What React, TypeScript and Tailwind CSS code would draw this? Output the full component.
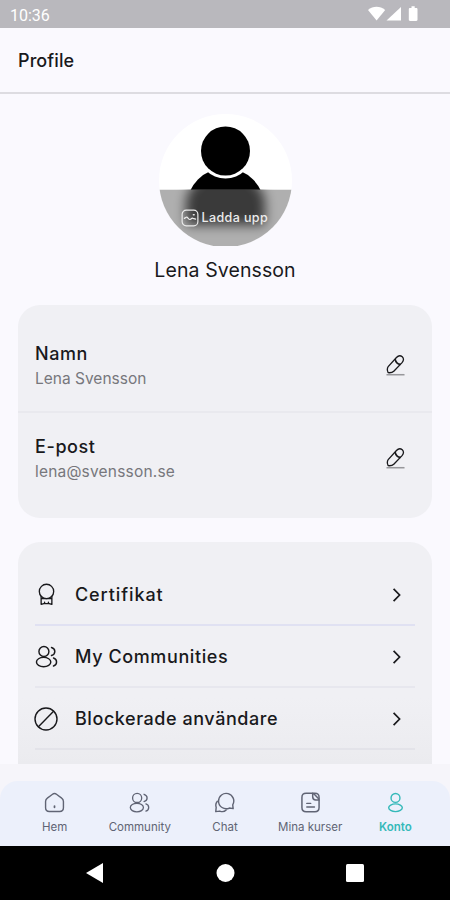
import type { ReactNode } from "react";

type IconProps = {
  className?: string;
};

type SvgIconProps = IconProps & {
  children: ReactNode;
  strokeWidth?: number;
};

function SvgIcon({ className, children, strokeWidth = 1.4 }: SvgIconProps) {
  return (
    <svg
      viewBox="0 0 24 24"
      fill="none"
      stroke="currentColor"
      strokeWidth={strokeWidth}
      strokeLinecap="round"
      strokeLinejoin="round"
      className={className}
    >
      {children}
    </svg>
  );
}

function RibbonIcon({ className }: IconProps) {
  return (
    <SvgIcon className={className}>
      <circle cx="12" cy="8.8" r="7.5" />
      <path d="M6.4 14v8.300l2.800-.8h5.600l2.800.8V14M6.400 16.300h11.200M10 21.500v-1.500M14 21.500v-1.500" />
    </SvgIcon>
  );
}

function PeopleIcon({ className }: IconProps) {
  return (
    <SvgIcon className={className} strokeWidth={1.5}>
      <circle cx="9.300" cy="6.800" r="5.200" />
      <ellipse cx="9" cy="17.800" rx="7.500" ry="4.900" />
      <path d="M17.200 2.600c2.200.7 3.500 2.200 3.500 4.200s-1.300 3.500-3.500 4.200M19.300 13.600c2 .6 3.200 2 3.200 4.100s-1.200 3.600-3.200 4.200" />
    </SvgIcon>
  );
}

function BlockIcon({ className }: IconProps) {
  return (
    <SvgIcon className={className}>
      <circle cx="12" cy="12" r="11" />
      <path d="M4.400 19.800 19.600 4.200" />
    </SvgIcon>
  );
}

function PencilIcon({ className }: IconProps) {
  return (
    <svg
      viewBox="0 0 20 24"
      fill="none"
      stroke="currentColor"
      strokeWidth="1.4"
      strokeLinejoin="round"
      className={className}
    >
      <path d="M2.300 13.200 11 3.600c1.900-2 4.400-2.200 6.100-.7 1.800 1.600 1.700 4-.2 6.100l-8.700 9c-1.200 1.200-2.700 1.700-5.100 1.600-1.900-.1-2.200-4.700-.8-6.400Z" />
      <path d="M9.600 5.200c.6 3.100 2.700 5.200 5.700 5.600" strokeWidth="1.8" />
      <path d="M.5 21.700h19" stroke="#97979b" strokeWidth="1.600" />
    </svg>
  );
}

function ChevronIcon({ className }: IconProps) {
  return (
    <svg
      viewBox="0 0 10 16"
      fill="none"
      stroke="currentColor"
      strokeWidth="1.700"
      className={className}
    >
      <path d="m1.600 1.800 6 6.200-6 6.200" />
    </svg>
  );
}

function HomeIcon({ className }: IconProps) {
  return (
    <SvgIcon className={className} strokeWidth={1.6}>
      <path d="M1.800 10.800c0-1.700.6-2.800 2-3.800l5.600-4.200c1.700-1.300 3.500-1.300 5.200 0L20.200 7c1.400 1 2 2.100 2 3.800V18c0 3-1.300 4.300-4.300 4.300H6.100c-3 0-4.300-1.300-4.300-4.300Z" />
      <path d="M12 16v1.500" strokeWidth="2" />
    </SvgIcon>
  );
}

function ChatIcon({ className }: IconProps) {
  return (
    <SvgIcon className={className} strokeWidth={1.6}>
      <path d="M5.200 10.300a8.700 8.700 0 1 1 16.200 4.400l.5 4.300-4.300-.7A8.700 8.700 0 0 1 5.200 10.300Z" />
      <path d="M3.800 10.500c-1.700 2-2.100 4.700-1.300 7l-.5 4.900 4.600-.6c2.700 1.100 5.400.7 7.300-1.200" />
    </SvgIcon>
  );
}

function CourseIcon({ className }: IconProps) {
  return (
    <SvgIcon className={className} strokeWidth={1.7}>
      <path d="M14.500 1.500H7C3.700 1.500 2.200 3 2.200 6.300v11.400c0 3.300 1.500 4.800 4.800 4.800h10c3.300 0 4.800-1.500 4.800-4.800V6.300c0-3.300-1.500-4.800-4.800-4.800h-2.500Z" />
      <path d="M14.500 1.500v4c0 2.500 1.100 3.700 3.500 3.700h3.800M15.800 2l5.500 5.600" />
      <path d="M7.800 13h4.400M7.800 17.200h8.700" />
    </SvgIcon>
  );
}

function UserIcon({ className }: IconProps) {
  return (
    <SvgIcon className={className} strokeWidth={1.6}>
      <circle cx="12" cy="6.800" r="5.100" />
      <ellipse cx="12" cy="18" rx="7.800" ry="4.400" />
    </SvgIcon>
  );
}

function PictureIcon({ className }: IconProps) {
  return (
    <SvgIcon className={className} strokeWidth={1.6}>
      <rect x="1.500" y="1.500" width="21" height="21" rx="5.500" />
      <path d="m4.500 12.500 2.500-1.500c2-1 3 3.500 5 3s2-2.500 4-1.500l3.500 1" />
      <path d="M16.500 7.500h1" strokeWidth="2" />
    </SvgIcon>
  );
}

const fields = [
  { label: "Namn", value: "Lena Svensson", valueSpacing: "tracking-[0px]" },
  { label: "E-post", value: "lena@svensson.se", valueSpacing: "tracking-[0.2px]" },
];

const links = [
  { label: "Certifikat", icon: RibbonIcon, size: "size-[23px]", line: "border-[#e0e1f2]", spacing: "tracking-[0.9px]" },
  { label: "My Communities", icon: PeopleIcon, size: "size-[23px]", line: "border-[#e7e7ee]", spacing: "tracking-[0.6px]" },
  { label: "Blockerade användare", icon: BlockIcon, size: "size-6", line: "border-[#e3e3e9]", spacing: "tracking-[0.55px]" },
];

const tabs = [
  { label: "Hem", icon: HomeIcon, active: false },
  { label: "Community", icon: PeopleIcon, active: false },
  { label: "Chat", icon: ChatIcon, active: false },
  { label: "Mina kurser", icon: CourseIcon, active: false },
  { label: "Konto", icon: UserIcon, active: true },
];

function StatusBar() {
  return (
    <div className="flex h-7 shrink-0 items-center justify-between bg-[#b9b8bd] pl-[10px] pr-[30px] text-white">
      <span className="pt-[3px] font-['Roboto'] text-[16px]">10:36</span>
      <svg viewBox="0 0 52 16" fill="currentColor" className="h-4 w-[52px]">
        <path d="M0 4C5-.3 12-.3 17.200 4L8.600 14.500Z" />
        <path d="M33 1v13.500H18.500Z" />
        <path d="M42 2h1.500V.3h3.200V2h1.600c.7 0 1.200.5 1.200 1.200v10.600c0 .7-.5 1.200-1.200 1.200H42c-.7 0-1.200-.5-1.200-1.200V3.200c0-.7.5-1.200 1.200-1.200Z" />
      </svg>
    </div>
  );
}

function Avatar() {
  return (
    <div className="relative h-[135px] w-[133px] overflow-hidden">
      <svg viewBox="0 0 133 135" className="h-[135px] w-[133px]">
        <defs>
          <clipPath id="avatar-circle">
            <circle cx="66.500" cy="69.500" r="66.500" />
          </clipPath>
          <clipPath id="avatar-body">
            <rect width="133" height="114" />
          </clipPath>
          <clipPath id="avatar-overlay">
            <rect y="78.500" width="133" height="57" />
          </clipPath>
          <filter id="avatar-blur" x="-30%" y="-30%" width="160%" height="160%">
            <feGaussianBlur stdDeviation="6" />
          </filter>
        </defs>
        <g clipPath="url(#avatar-circle)">
          <rect width="133" height="135" fill="#fff" />
          <circle cx="66.500" cy="96" r="39" clipPath="url(#avatar-body)" />
          <circle cx="66.500" cy="40" r="27.500" fill="#fff" />
          <circle cx="66.500" cy="40" r="24.500" />
          <g clipPath="url(#avatar-overlay)">
            <rect y="78.500" width="133" height="57" fill="#fff" />
            <path d="M27 114V88c3-10 12-22 26-26h27c14 4 23 16 26 26v26Z" filter="url(#avatar-blur)" />
            <rect y="78.500" width="133" height="57" fill="#6b6b6b" fillOpacity=".54" />
          </g>
        </g>
      </svg>
      <div className="absolute left-[22px] top-[98px] flex items-center gap-[3px] text-[#ececec]">
        <PictureIcon className="size-[18px]" />
        <span className="text-[12.500px] font-medium leading-[18px] tracking-[0.4px]">Ladda upp</span>
      </div>
    </div>
  );
}

export default function App() {
  return (
    <div className="flex h-[900px] w-[450px] flex-col overflow-hidden bg-[#faf9fe] font-['Inter',sans-serif] text-[#19191c]">
      <StatusBar />
      <header className="flex h-[66px] shrink-0 items-center border-b-2 border-[#dddce1] pl-[18px] pt-px">
        <h1 className="text-[18px] font-medium leading-6 tracking-[0.1px]">Profile</h1>
      </header>

      <main className="flex min-h-0 flex-1 flex-col px-[18px]">
        <section className="flex flex-col items-center pt-[17px]">
          <Avatar />
          <h2 className="mt-[10px] text-[19.500px] leading-7 tracking-[0.1px]">Lena Svensson</h2>
        </section>

        <section className="mt-[21px] h-[213px] shrink-0 rounded-[22px] bg-[#f0f0f4]">
          {fields.map((field, index) => (
            <div
              key={field.label}
              className={
                index === 0
                  ? "flex h-[108px] justify-between border-b-2 border-[#e9e9ee] pl-[17px] pr-[27px] pt-[37px]"
                  : "flex justify-between pl-[17px] pr-[27px] pt-[22px]"
              }
            >
              <div>
                <p className="text-[18px] font-medium leading-6 tracking-[0.6px]">{field.label}</p>
                <p className={`mt-px text-[15.500px] leading-6 text-[#77777c] ${field.valueSpacing}`}>
                  {field.value}
                </p>
              </div>
              <button type="button" className="mt-[12px] h-[23px] w-[19px]">
                <PencilIcon className="h-[23px] w-[19px]" />
              </button>
            </div>
          ))}
        </section>

        <section className="mt-6 h-[222px] shrink-0 rounded-t-[22px] bg-linear-to-b from-[#f0f0f4] from-70% to-[#ebebef] px-[17px] pt-[22px]">
          {links.map(({ label, icon: Icon, size, line, spacing }) => (
            <div key={label} className={`flex h-[62px] items-center border-b-2 pt-px ${line}`}>
              <div className="-ml-px flex w-6 justify-center">
                <Icon className={size} />
              </div>
              <span className={`ml-[17px] flex-1 text-[18px] font-medium leading-6 ${spacing}`}>{label}</span>
              <ChevronIcon className="mr-[13px] h-4 w-[10px]" />
            </div>
          ))}
        </section>
        <div className="-mx-[18px] min-h-0 flex-1 bg-[#f6f5fa]" />
      </main>

      <div className="shrink-0 bg-[#f6f5fa]">
        <nav className="grid h-[65px] grid-cols-5 rounded-t-[18px] bg-[#ecf0fb] px-[12px] pt-[11px]">
          {tabs.map(({ label, icon: Icon, active }) => (
            <button
              key={label}
              type="button"
              className={
                active
                  ? "flex flex-col items-center font-semibold text-[#35b9b9]"
                  : "flex flex-col items-center text-[#606474]"
              }
            >
              <Icon className="size-[21px]" />
              <span className="mt-[6px] whitespace-nowrap text-[11.500px] leading-4">{label}</span>
            </button>
          ))}
        </nav>
      </div>

      <div className="flex h-[54px] shrink-0 items-center bg-black pl-[86px] text-white">
        <svg viewBox="0 0 279 22" fill="currentColor" className="h-[22px] w-[279px]">
          <path d="M0 11 17 1v20Z" />
          <circle cx="139.500" cy="11" r="9" />
          <rect x="260" y="2" width="18" height="18" rx="1.500" />
        </svg>
      </div>
    </div>
  );
}
